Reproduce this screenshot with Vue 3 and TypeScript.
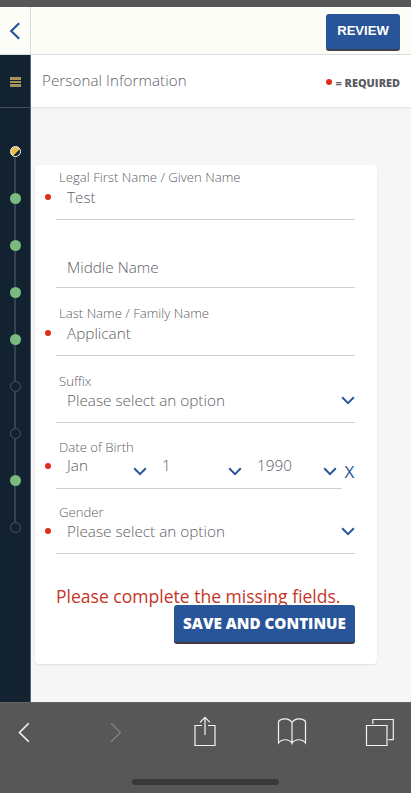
<script setup lang="ts">
interface Field {
  id: string
  label?: string
  value: string
  required?: boolean
  select?: boolean
}

const fields: Field[] = [
  { id: 'first', label: 'Legal First Name / Given Name', value: 'Test', required: true },
  { id: 'middle', value: 'Middle Name' },
  { id: 'last', label: 'Last Name / Family Name', value: 'Applicant', required: true },
  { id: 'suffix', label: 'Suffix', value: 'Please select an option', select: true },
  { id: 'dob', label: 'Date of Birth', value: '', required: true },
  { id: 'gender', label: 'Gender', value: 'Please select an option', required: true, select: true },
]

const dateParts: string[] = ['Jan', '1', '1990']

type StepState = 'current' | 'done' | 'todo'
const steps: StepState[] = ['current', 'done', 'done', 'done', 'done', 'todo', 'todo', 'done', 'todo']
</script>

<template>
  <div class="screen">
    <div class="status"></div>
    <header class="topbar">
      <button class="back" aria-label="Back">
        <svg width="12" height="18" viewBox="0 0 12 18"><path d="M10.2 1.2 2.2 9l8 7.8" /></svg>
      </button>
      <button class="review">REVIEW</button>
    </header>

    <div class="body">
      <nav class="rail">
        <div class="menu"><i></i><i></i><i></i></div>
        <ol class="steps">
          <li v-for="(s, i) in steps" :key="i" :class="['step', s]"></li>
        </ol>
      </nav>

      <main class="main">
        <div class="title">
          <h1>Personal Information</h1>
          <p class="legend"><i class="dot"></i><span>= REQUIRED</span></p>
        </div>

        <form class="card" @submit.prevent>
          <div v-for="f in fields" :key="f.id" :class="['field', f.id]">
            <i v-if="f.required" class="dot mark"></i>
            <div v-if="f.label" class="label">{{ f.label }}</div>
            <div v-if="f.id === 'dob'" class="dates">
              <div v-for="p in dateParts" :key="p" class="date">
                <span class="value">{{ p }}</span>
                <svg class="chev" width="14" height="9" viewBox="0 0 14 9"><path d="M1.2 1.3 7 7.1l5.8-5.8" /></svg>
              </div>
              <span class="clear">X</span>
            </div>
            <div v-else class="line">
              <span class="value">{{ f.value }}</span>
              <svg v-if="f.select" class="chev" width="14" height="9" viewBox="0 0 14 9"><path d="M1.2 1.3 7 7.1l5.8-5.8" /></svg>
            </div>
          </div>
          <p class="error">Please complete the missing fields.</p>
          <button class="save">SAVE AND CONTINUE</button>
        </form>
      </main>
    </div>

    <footer class="browser">
      <div class="tools">
        <svg class="t-back" width="12" height="21" viewBox="0 0 12 21"><path d="M10.8 1.2 1.5 10.5l9.3 9.3" /></svg>
        <svg class="t-next" width="12" height="21" viewBox="0 0 12 21"><path d="M1 1.2 10.5 10.5 1 19.8" /></svg>
        <svg class="t-share" width="24" height="32" viewBox="0 0 24 32"><path d="M9 10.5H2v20h20v-20h-7M12 20V2.5M7 7.3l5-5 5 5" /></svg>
        <svg class="t-book" width="30" height="30" viewBox="0 0 30 30"><path d="M15 5.5C12 .8 4.500.8 1.500 4.500v21.500c3.500-4.500 10.500-4.200 13.500 0 3-4.200 10-4.500 13.500 0V4.500C25.500.8 18 .8 15 5.500V27.500" /></svg>
        <svg class="t-tabs" width="30" height="30" viewBox="0 0 30 30"><path d="M1.5 8.5h20.5v20H1.5zM7.8 7V2.500h20.500v20.200H23.500" /></svg>
      </div>
      <div class="home"></div>
    </footer>
  </div>
</template>

<style>
body { overflow: hidden; }
</style>

<style scoped>
*, *::before, *::after { box-sizing: border-box; }
.screen {
  width: 411px;
  height: 793px;
  display: flex;
  flex-direction: column;
  background: #f6f6f6;
  font-family: "Open Sans", sans-serif;
  font-weight: 300;
  color: #606067;
}
h1, p, ol { margin: 0; padding: 0; }
button { font: inherit; border: 0; padding: 0; }
svg { display: block; fill: none; flex: none; }
.status { height: 7px; background: #575757; flex: none; }
.topbar {
  height: 48px;
  flex: none;
  display: flex;
  justify-content: space-between;
  background: #fcfdf7;
  border-bottom: 1px solid #d9dade;
}
.back {
  width: 31px;
  display: flex;
  align-items: center;
  padding-left: 9px;
  background: none;
  border-right: 1px solid #d6d7dd;
}
.back path { stroke: #285499; stroke-width: 2.2; }
.review {
  width: 74px;
  height: 37px;
  margin: 7px 11px 0 0;
  padding-bottom: 3px;
  border-radius: 3px;
  border-bottom: 2px solid #3e4250;
  background: #285499;
  color: #fff;
  font-family: "Liberation Sans", sans-serif;
  font-weight: 700;
  font-size: 13.1px;
}
.body { flex: 1; min-height: 0; display: flex; }
.rail { width: 31px; background: #132231; border-right: 1px solid #596570; flex: none; }
.menu {
  height: 53px;
  display: flex;
  flex-direction: column;
  align-items: center;
  justify-content: center;
  gap: 1px;
  padding: 2px 0 0 1px;
  border-bottom: 1px solid #42505b;
}
.menu i { width: 11px; height: 2.4px; background: #a8935a; }
.steps {
  list-style: none;
  margin: 38px 0 0 10px;
  display: flex;
  flex-direction: column;
  gap: 36px;
}
.step { position: relative; width: 11px; height: 11px; }
.step::before {
  content: "";
  position: absolute;
  left: 0;
  top: 0;
  width: 11px;
  height: 11px;
  border-radius: 50%;
}
.step + .step::after {
  content: "";
  position: absolute;
  left: 4px;
  bottom: 11px;
  width: 2px;
  height: 36px;
  background: #33424e;
}
.done::before { background: #7abb7f; }
.todo::before { border: 1px solid #495761; }
.current::before {
  border: 1px solid #fff;
  background: linear-gradient(135deg, #e8c04b 58%, #132231 60%) border-box;
}
.main { flex: 1; }
.title {
  height: 53px;
  display: flex;
  justify-content: space-between;
  padding: 0 11px 0 11px;
  background: #fff;
  border-bottom: 1px solid #e6e6e6;
  box-shadow: 0 1px 2px rgba(0, 0, 0, .04);
}
h1 { margin-top: 14px; font-weight: 300; font-size: 15.1px; line-height: 22px; letter-spacing: .1px; }
.dot { width: 6px; height: 6px; border-radius: 50%; background: #e02b20; }
.legend {
  display: flex;
  align-items: center;
  gap: 3px;
  height: 20px;
  margin-top: 17px;
  font-size: 10.9px;
  font-weight: 800;
  color: #5b5c66;
}
.card {
  width: 342px;
  height: 499px;
  margin: 57px 0 0 4px;
  padding: 0 22px 0 21px;
  display: flex;
  flex-direction: column;
  background: #fff;
  border-radius: 4px;
  box-shadow: 0 1px 2px rgba(0, 0, 0, .09);
}
.field {
  position: relative;
  flex: none;
  border-bottom: 1.5px solid #d0d0d2;
}
.first { height: 55px; padding-top: 3px; }
.middle { height: 68px; padding-top: 37px; }
.last { height: 68px; padding-top: 16px; }
.suffix { height: 67px; padding-top: 16px; }
.dob { height: 66px; padding-top: 15px; width: 286px; }
.gender { height: 65px; padding-top: 14px; }
.label { height: 18.5px; padding-left: 3px; font-size: 13.15px; line-height: 18px; white-space: nowrap; }
.suffix .label, .gender .label { height: 18px; }
.dob .label { height: 17px; }
.line {
  display: flex;
  justify-content: space-between;
  align-items: center;
  height: 20px;
  padding-left: 11px;
}
.value { font-size: 15.3px; line-height: 20px; white-space: nowrap; }
.chev path { stroke: #285499; stroke-width: 2; }
.line .chev { margin-top: 1px; }
.mark { position: absolute; left: -11px; bottom: 19px; }
.dates { display: flex; height: 20px; width: 300px; padding-left: 11px; }
.date { width: 95px; display: flex; justify-content: space-between; padding-right: 15px; }
.date .chev { margin-top: 12px; }
.clear { font-size: 17px; line-height: 33px; color: #285499; font-weight: 400; margin-left: -7.5px; }
.error {
  margin-top: 30px;
  height: 21px;
  font-size: 17.55px;
  line-height: 25px;
  font-weight: 400;
  color: #c53427;
  white-space: nowrap;
}
.save {
  position: relative;
  align-self: flex-end;
  width: 181px;
  height: 39px;
  padding-bottom: 1px;
  border-radius: 3px;
  border-bottom: 2px solid #3e3a40;
  background: #285499;
  color: #fff;
  font-weight: 800;
  font-size: 15.2px;
  white-space: nowrap;
}
.browser { height: 91px; flex: none; background: #575757; border-top: 1px solid #646464; }
.tools { display: flex; height: 76px; padding: 0 17px 0 18px; }
.tools path { stroke: #f2f2f2; stroke-width: 1.2; }
.t-back { margin-top: 18.5px; }
.tools .t-back path { stroke-width: 1.6; }
.t-next { margin: 18.5px 0 0 80px; }
.tools .t-next path { stroke: #858585; }
.t-share { margin: 12px 0 0 71px; }
.t-book { margin: 14px 0 0 60px; }
.t-tabs { margin: 14px 0 0 58px; }
.home { width: 147px; height: 6px; margin: 0 auto; background: #383838; border-radius: 3px; }
</style>
